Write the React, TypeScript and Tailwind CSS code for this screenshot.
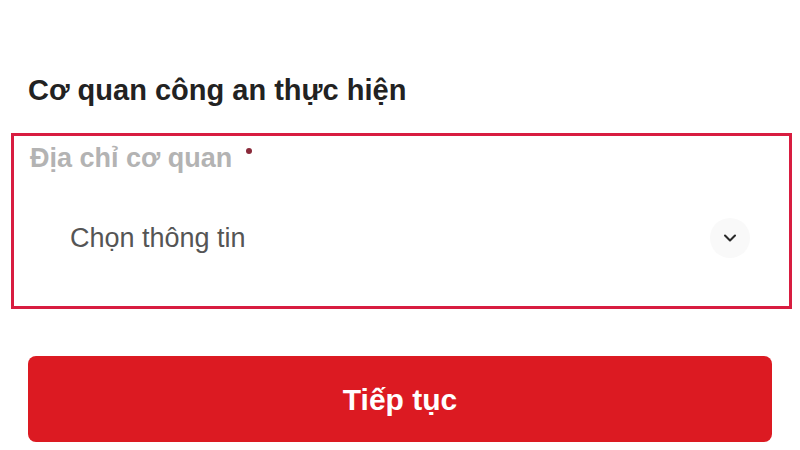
import { ChevronDown } from "lucide-react";

const App = () => {
  return (
    <div className="w-[800px] h-[450px] bg-white overflow-hidden font-['Liberation_Sans',Arial,sans-serif]">
      <div className="pt-[71px] px-[28px]">
        <h2 className="text-[29px] leading-[38px] font-bold text-[#222222]">
          Cơ quan công an thực hiện
        </h2>
      </div>
      <div className="ml-[11px] mr-[8px] mt-[24px] h-[176px] border-[3px] border-[#d81d40] bg-white flex flex-col">
        <div className="pl-[16px] pt-[5px] flex items-start">
          <span className="text-[27px] leading-[34px] font-bold text-[#b3b3b3]">
            Địa chỉ cơ quan
          </span>
          <span className="ml-[14px] mt-[7px] w-[6px] h-[6px] rounded-full bg-[#8a2a3a]" />
        </div>
        <div className="flex items-center justify-between pl-[56px] pr-[39px] mt-[43px]">
          <span className="text-[27px] leading-[34px] text-[#555555]">
            Chọn thông tin
          </span>
          <div className="w-[40px] h-[40px] rounded-full bg-[#f9f9f9] flex items-center justify-center">
            <ChevronDown className="w-[20px] h-[20px] text-[#2a2a2a]" strokeWidth={2.5} />
          </div>
        </div>
      </div>
      <div className="px-[28px] mt-[47px]">
        <button className="w-full h-[86px] rounded-[8px] bg-[#dc1a22] text-white text-[30px] font-bold flex items-center justify-center">
          Tiếp tục
        </button>
      </div>
    </div>
  );
};

export default App;
